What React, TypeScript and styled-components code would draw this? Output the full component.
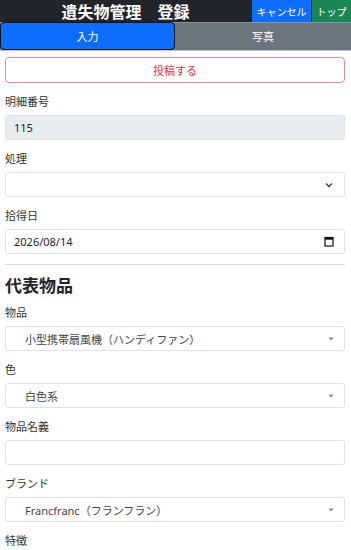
import styled, { createGlobalStyle } from "styled-components";

const GlobalStyle = createGlobalStyle`
    body {
        margin: 0;
        background: #fff;
        font-family: "Noto Sans", "Noto Sans CJK JP", sans-serif;
        color: #212529;
    }
`;

const Page = styled.div`
    width: 351px;
    height: 550px;
    overflow: hidden;
`;

const Header = styled.div`
    display: flex;
    align-items: stretch;
    height: 22px;
    background: #212529;
`;

const Title = styled.div`
    flex: 1;
    text-align: center;
    color: #fff;
    font-family: "Noto Sans CJK JP", sans-serif;
    font-weight: 700;
    font-size: 16px;
    line-height: 22px;
`;

const HeaderButton = styled.div<{ $bg: string; $width: number }>`
    width: ${p => p.$width}px;
    height: 22px;
    display: flex;
    align-items: center;
    justify-content: center;
    background: ${p => p.$bg};
    color: #fff;
    font-family: "Noto Sans CJK JP", sans-serif;
    font-size: 10px;
    margin-left: 1px;
`;

const Tabs = styled.div`
    display: flex;
    height: 27px;
    background: #6c757d;
    border-top: 1px solid #8a949c;
    border-bottom: 1px solid #b7c4d1;
`;

const Tab = styled.div<{ $active?: boolean }>`
    flex: ${p => (p.$active ? "0 0 175px" : "1")};
    display: flex;
    align-items: center;
    justify-content: center;
    box-sizing: border-box;
    color: #fff;
    font-family: "Noto Sans CJK JP", sans-serif;
    font-size: 11px;
    background: ${p => (p.$active ? "#0d6efd" : "transparent")};
    border: ${p => (p.$active ? "1px solid #111" : "none")};
    border-radius: ${p => (p.$active ? "4px" : "0")};
    margin-top: -1px;
`;

const Content = styled.div`
    padding: 6px 6px 0 5px;
`;

const PostButton = styled.div`
    height: 26px;
    box-sizing: border-box;
    border: 1px solid #e28a93;
    border-radius: 4px;
    display: flex;
    align-items: center;
    justify-content: center;
    color: #dc3545;
    font-family: "Noto Sans CJK JP", sans-serif;
    font-size: 11px;
`;

const Group = styled.div`
    margin-top: 11px;
`;

const Label = styled.div`
    font-family: "Noto Sans CJK JP", sans-serif;
    font-size: 11px;
    line-height: 15px;
    color: #333;
    margin-bottom: 6px;
`;

const Field = styled.div<{ $disabled?: boolean; $indent?: number }>`
    height: 25px;
    box-sizing: border-box;
    border: 1px solid #dee2e6;
    border-radius: 3px;
    background: ${p => (p.$disabled ? "#e9ecef" : "#fff")};
    display: flex;
    align-items: center;
    justify-content: space-between;
    padding: 0 10px 0 ${p => p.$indent ?? 8}px;
    font-size: 11px;
    color: ${p => (p.$indent ? "#444" : "#212529")};
`;

const Rule = styled.hr`
    margin: 10px 0 0;
    border: none;
    border-top: 1px solid #d6d8db;
`;

const Heading = styled.div`
    font-family: "Noto Sans CJK JP", sans-serif;
    font-weight: 700;
    font-size: 17px;
    line-height: 24px;
    margin-top: 8px;
    margin-bottom: -3px;
`;

const Chevron = () => (
    <svg width="10" height="8" viewBox="0 0 10 8">
        <path d="M2 2.5 L5 5.5 L8 2.5" fill="none" stroke="#343a40" strokeWidth="1.3" />
    </svg>
);

const Calendar = () => (
    <svg width="10" height="11" viewBox="0 0 10 11">
        <rect x="1" y="1.5" width="8" height="8.5" fill="none" stroke="#111" strokeWidth="1.2" />
        <rect x="1" y="1.5" width="8" height="2.2" fill="#111" />
    </svg>
);

const Caret = () => (
    <svg width="6" height="4" viewBox="0 0 6 4">
        <path d="M0.5 0.5 L5.5 0.5 L3 3.5 Z" fill="#888" />
    </svg>
);

export default function App() {
    return (
        <Page>
            <GlobalStyle />
            <Header>
                <Title>遺失物管理　登録</Title>
                <HeaderButton $bg="#0d6efd" $width={59}>キャンセル</HeaderButton>
                <HeaderButton $bg="#198754" $width={39}>トップ</HeaderButton>
            </Header>
            <Tabs>
                <Tab $active>入力</Tab>
                <Tab>写真</Tab>
            </Tabs>
            <Content>
                <PostButton>投稿する</PostButton>
                <Group>
                    <Label>明細番号</Label>
                    <Field $disabled>115</Field>
                </Group>
                <Group>
                    <Label>処理</Label>
                    <Field><span /><Chevron /></Field>
                </Group>
                <Group>
                    <Label>拾得日</Label>
                    <Field>2026/08/14<Calendar /></Field>
                </Group>
                <Rule />
                <Heading>代表物品</Heading>
                <Group>
                    <Label>物品</Label>
                    <Field $indent={19}>小型携帯扇風機（ハンディファン）<Caret /></Field>
                </Group>
                <Group>
                    <Label>色</Label>
                    <Field $indent={19}>白色系<Caret /></Field>
                </Group>
                <Group>
                    <Label>物品名義</Label>
                    <Field />
                </Group>
                <Group>
                    <Label>ブランド</Label>
                    <Field $indent={19}>Francfranc（フランフラン）<Caret /></Field>
                </Group>
                <Group>
                    <Label>特徴</Label>
                </Group>
            </Content>
        </Page>
    );
}
